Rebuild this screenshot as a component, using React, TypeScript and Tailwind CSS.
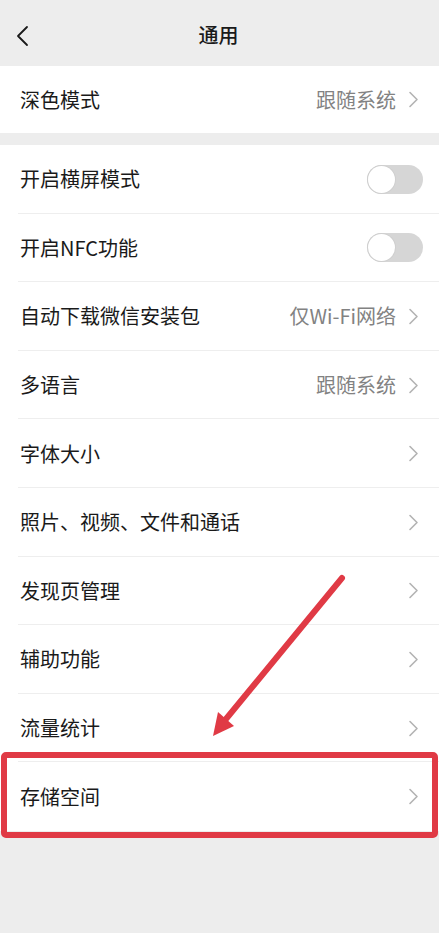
import React from 'react'

const font = { fontFamily: '"Noto Sans CJK SC", "Noto Sans", sans-serif' }

type Row = {
  label: string
  value?: string
  toggle?: boolean
}

const rows: Row[] = [
  { label: '开启横屏模式', toggle: true },
  { label: '开启NFC功能', toggle: true },
  { label: '自动下载微信安装包', value: '仅Wi-Fi网络' },
  { label: '多语言', value: '跟随系统' },
  { label: '字体大小' },
  { label: '照片、视频、文件和通话' },
  { label: '发现页管理' },
  { label: '辅助功能' },
  { label: '流量统计' },
  { label: '存储空间' },
]

function Chevron() {
  return (
    <svg className="w-[11px] h-[17px] text-[#b3b3b3]" viewBox="0 0 11 17" fill="none" stroke="currentColor">
      <path d="M2 1.5l7 7-7 7" strokeWidth={1.6} strokeLinecap="round" strokeLinejoin="round" />
    </svg>
  )
}

function Toggle() {
  return (
    <div className="w-[56px] h-[29px] -mr-[4px] rounded-full bg-[#d6d6d6] p-[1px] flex items-center">
      <div className="w-[27px] h-[27px] rounded-full bg-white shadow-[0_0_0_1px_#cfcfcf]" />
    </div>
  )
}

function SettingRow({ row, last }: { row: Row; last?: boolean }) {
  return (
    <div className="relative h-[68.6px] pl-5 pr-[20px] flex items-center bg-white">
      <span className="flex-1 text-[20px] text-[#1a1a1a]">{row.label}</span>
      {row.toggle ? (
        <Toggle />
      ) : (
        <div className="flex items-center gap-[12px]">
          {row.value && <span className="text-[20px] text-[#828282]">{row.value}</span>}
          <Chevron />
        </div>
      )}
      {!last && <div className="absolute left-[18px] right-0 bottom-0 h-px bg-[#eeeeee]" />}
    </div>
  )
}

export default function App() {
  return (
    <div className="relative w-[439px] h-[933px] bg-[#ededed] overflow-hidden" style={font}>
      {/* Header */}
      <div className="relative h-[66px] flex items-center justify-center">
        <svg className="absolute left-[15px] top-[25px] w-[16px] h-[22px] text-[#1a1a1a]" viewBox="0 0 16 22" fill="none" stroke="currentColor">
          <path d="M12 2L3 11l9 9" strokeWidth={1.8} strokeLinecap="round" strokeLinejoin="round" />
        </svg>
        <span className="text-[20px] font-medium text-[#1a1a1a] mt-[4px] -ml-[2px]">通用</span>
      </div>

      {/* Dark mode */}
      <div className="h-[67px] pl-5 pr-[20px] flex items-center bg-white">
        <span className="flex-1 text-[20px] text-[#1a1a1a]">深色模式</span>
        <div className="flex items-center gap-[12px]">
          <span className="text-[20px] text-[#828282]">跟随系统</span>
          <Chevron />
        </div>
      </div>

      <div className="h-[12px]" />

      {/* List */}
      <div>
        {rows.map((row, i) => (
          <SettingRow key={row.label} row={row} last={i === rows.length - 1} />
        ))}
      </div>

      {/* Highlight box */}
      <div className="absolute left-[1px] w-[437px] top-[752px] h-[86px] border-[6px] border-[#e03a45] rounded-[5px] pointer-events-none" />

      {/* Arrow */}
      <svg className="absolute inset-0 w-[439px] h-[933px] pointer-events-none" viewBox="0 0 439 933">
        <line x1="342" y1="578" x2="226" y2="719" stroke="#e03a45" strokeWidth={6} strokeLinecap="round" />
        <polygon points="213,736 218,712 234,726" fill="#e03a45" />
      </svg>
    </div>
  )
}
